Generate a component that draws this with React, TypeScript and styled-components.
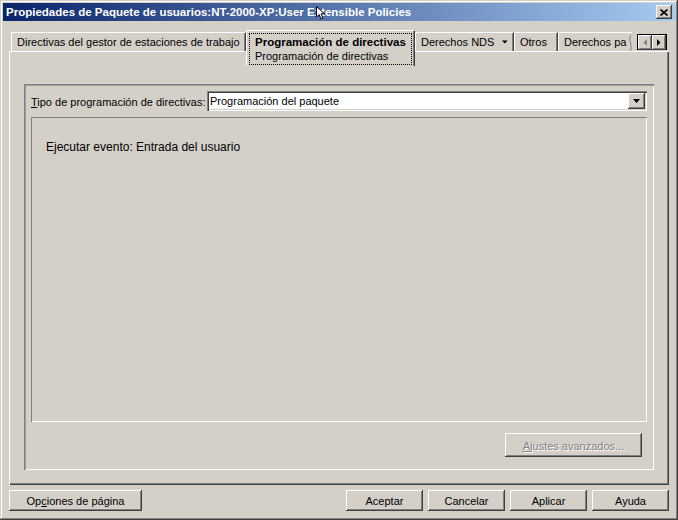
import React from 'react';
import styled, { createGlobalStyle } from 'styled-components';

const GlobalStyle = createGlobalStyle`
  html, body {
    margin: 0;
    padding: 0;
    background: #d4d0c8;
  }
  body {
    font-family: "Liberation Sans", Arial, sans-serif;
    font-size: 11px;
    color: #000;
  }
  * {
    box-sizing: border-box;
  }
`;

const raised = `
  box-shadow: inset -1px -1px #404040, inset 1px 1px #fff, inset -2px -2px #808080;
`;

const Window = styled.div`
  position: relative;
  width: 678px;
  height: 520px;
  padding: 3px;
  background: #d4d0c8;
  box-shadow: inset -1px -1px #404040, inset 1px 1px #d4d0c8, inset -2px -2px #808080,
    inset 2px 2px #fff;
  display: flex;
  flex-direction: column;
`;

const TitleBar = styled.div`
  height: 18px;
  flex: none;
  display: flex;
  align-items: center;
  justify-content: space-between;
  padding: 0 3px 0 3px;
  background: linear-gradient(to right, #0a246a, #a6caf0);
  color: #fff;
  font-weight: bold;
  font-size: 11.5px;
  white-space: nowrap;
`;

const CloseButton = styled.div`
  width: 16px;
  height: 14px;
  display: flex;
  align-items: center;
  justify-content: center;
  background: #d4d0c8;
  ${raised}
`;

const Content = styled.div`
  flex: 1;
  display: flex;
  flex-direction: column;
  padding: 9px 6px 0 6px;
`;

const TabStrip = styled.div`
  height: 21px;
  flex: none;
  display: flex;
  align-items: flex-end;
  padding-left: 2px;
  position: relative;
  z-index: 1;
`;

const Tab = styled.div<{ $w: number }>`
  width: ${(p) => p.$w}px;
  height: 19px;
  flex: none;
  display: flex;
  align-items: center;
  gap: 8px;
  padding: 0 5px 1px 5px;
  white-space: nowrap;
  overflow: hidden;
  position: relative;
  border-top: 1px solid #fff;
  border-left: 1px solid #fff;
  border-right: 1px solid #404040;
  border-top-left-radius: 2px;
  box-shadow: inset -1px 0 #808080;
  background: #d4d0c8;
`;

const ActiveTab = styled.div`
  width: 169px;
  height: 36px;
  flex: none;
  align-self: flex-start;
  padding: 2px 2px 1px 2px;
  border-top: 1px solid #fff;
  border-left: 1px solid #fff;
  border-right: 1px solid #404040;
  border-top-left-radius: 2px;
  box-shadow: inset -1px 0 #808080;
  background: #d4d0c8;
`;

const FocusRect = styled.div`
  border: 1px dotted #000;
  padding: 1px 5px;
  line-height: 14px;
  white-space: nowrap;
`;

const TabTitle = styled.div`
  font-weight: bold;
  font-size: 11.5px;
`;

const ClipMark = styled.svg`
  position: absolute;
  right: 0;
  top: 2px;
`;

const Spacer = styled.div`
  flex: 1;
`;

const ScrollPair = styled.div`
  display: flex;
  margin: 0 2px 1px 0;
  border: 1px solid #000;
  border-bottom: none;
`;

const ScrollButton = styled.div`
  width: 14px;
  height: 15px;
  display: flex;
  align-items: center;
  justify-content: center;
  background: #d4d0c8;
  ${raised}
`;

const Panel = styled.div`
  height: 434px;
  flex: none;
  display: flex;
  flex-direction: column;
  padding: 33px 15px 15px 15px;
  box-shadow: inset 1px 1px #fff, inset -1px -1px #404040, inset -2px -2px #808080;
`;

const GroupBox = styled.div`
  flex: 1;
  display: flex;
  flex-direction: column;
  padding: 7px 7px 13px 7px;
  box-shadow: inset 1px 1px #808080, inset 2px 2px #a09d96, inset -1px -1px #fff;
`;

const FieldRow = styled.div`
  display: flex;
  align-items: center;
  height: 20px;
`;

const FieldLabel = styled.div`
  width: 176px;
  flex: none;
  padding-top: 1px;
  white-space: nowrap;
`;

const Combo = styled.div`
  flex: 1;
  height: 20px;
  display: flex;
  align-items: center;
  justify-content: space-between;
  padding: 2px 2px 2px 3px;
  background: #fff;
  box-shadow: inset 1px 1px #808080, inset 2px 2px #404040, inset -1px -1px #fff,
    inset -2px -2px #d4d0c8;
`;

const ComboButton = styled.div`
  width: 17px;
  height: 16px;
  display: flex;
  align-items: center;
  justify-content: center;
  background: #d4d0c8;
  ${raised}
`;

const InnerPanel = styled.div`
  margin-top: 6px;
  height: 305px;
  flex: none;
  padding: 23px 15px;
  font-size: 12px;
  line-height: 14px;
  box-shadow: inset 1px 1px #808080, inset -1px -1px #fff;
`;

const AdvancedRow = styled.div`
  margin-top: 11px;
  display: flex;
  justify-content: flex-end;
  padding-right: 5px;
`;

const Button = styled.div<{ $w: number; $h?: number; $disabled?: boolean }>`
  width: ${(p) => p.$w}px;
  height: ${(p) => p.$h ?? 21}px;
  flex: none;
  display: flex;
  align-items: center;
  justify-content: center;
  padding-top: 1px;
  background: #d4d0c8;
  white-space: nowrap;
  color: ${(p) => (p.$disabled ? '#808080' : '#000')};
  text-shadow: ${(p) => (p.$disabled ? '1px 1px #fff' : 'none')};
  ${raised}
`;

const ButtonRow = styled.div`
  margin-top: 5px;
  display: flex;
  gap: 5px;
`;

const Cursor = styled.svg`
  position: absolute;
  left: 316px;
  top: 6px;
`;

const DownTriangle: React.FC<{ w?: number }> = ({ w = 7 }) => (
  <svg width={w} height={4} viewBox="0 0 7 4">
    <path d="M0 0 H7 L3.5 4 Z" fill="#000" />
  </svg>
);

const App: React.FC = () => {
  return (
    <>
      <GlobalStyle />
      <Window>
        <TitleBar>
          <span>Propiedades de Paquete de usuarios:NT-2000-XP:User Extensible Policies</span>
          <CloseButton>
            <svg width="8" height="7" viewBox="0 0 8 7">
              <path d="M0.5 0.5 L7.5 6.5 M7.5 0.5 L0.5 6.5" stroke="#000" strokeWidth="1.6" />
            </svg>
          </CloseButton>
        </TitleBar>

        <Content>
          <TabStrip>
            <Tab $w={235}>Directivas del gestor de estaciones de trabajo</Tab>
            <ActiveTab>
              <FocusRect>
                <TabTitle>Programación de directivas</TabTitle>
                <div>Programación de directivas</div>
              </FocusRect>
            </ActiveTab>
            <Tab $w={99}>
              Derechos NDS
              <DownTriangle />
            </Tab>
            <Tab $w={44}>Otros</Tab>
            <Tab $w={74} style={{ borderRight: 'none', boxShadow: 'none' }}>
              Derechos pa
              <ClipMark width="3" height="16" viewBox="0 0 3 16">
                <path d="M1.5 0 Q0 4 1.5 8 Q3 12 1.5 16" stroke="#808080" fill="none" />
              </ClipMark>
            </Tab>
            <Spacer />
            <ScrollPair>
              <ScrollButton>
                <svg width="4" height="7" viewBox="0 0 4 7">
                  <path d="M4 0 V7 L0.5 3.5 Z" fill="#808080" />
                </svg>
              </ScrollButton>
              <ScrollButton>
                <svg width="4" height="7" viewBox="0 0 4 7">
                  <path d="M0 0 V7 L3.5 3.5 Z" fill="#000" />
                </svg>
              </ScrollButton>
            </ScrollPair>
          </TabStrip>

          <Panel>
            <GroupBox>
              <FieldRow>
                <FieldLabel>
                  <u>T</u>ipo de programación de directivas:
                </FieldLabel>
                <Combo>
                  <span>Programación del paquete</span>
                  <ComboButton>
                    <DownTriangle />
                  </ComboButton>
                </Combo>
              </FieldRow>
              <InnerPanel>Ejecutar evento: Entrada del usuario</InnerPanel>
              <AdvancedRow>
                <Button $w={137} $h={24} $disabled>
                  <span>
                    <u>A</u>justes avanzados...
                  </span>
                </Button>
              </AdvancedRow>
            </GroupBox>
          </Panel>

          <ButtonRow>
            <Button $w={133}>
              <span>
                Op<u>c</u>iones de página
              </span>
            </Button>
            <Spacer />
            <Button $w={77}>Aceptar</Button>
            <Button $w={77}>Cancelar</Button>
            <Button $w={77}>Aplicar</Button>
            <Button $w={77}>Ayuda</Button>
          </ButtonRow>
        </Content>

        <Cursor width="11" height="14" viewBox="0 0 11 14">
          <path d="M0.5 0.5 V11 L3 8.5 L5 13 L6.8 12.2 L5 7.8 H8.5 Z" fill="#fff" stroke="#000" />
        </Cursor>
      </Window>
    </>
  );
};

export default App;
